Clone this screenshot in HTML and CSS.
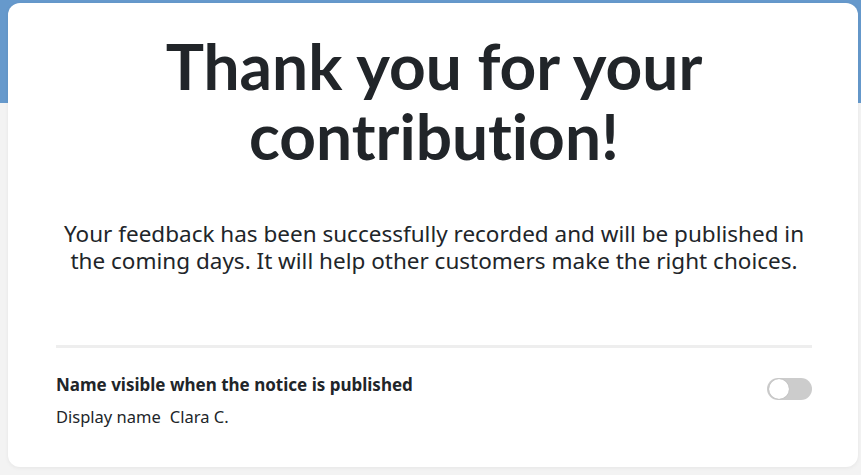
FILE: index.html
```html
<!DOCTYPE html>
<html lang="en">
<head>
<meta charset="utf-8">
<title>Thank you</title>
<link rel="stylesheet" href="styles.css">
</head>
<body>
<div class="page">
  <main class="card">
    <h1 class="title">Thank you for your contribution!</h1>
    <p class="lead">Your feedback has been successfully recorded and will be published in the coming days. It will help other customers make the right choices.</p>
    <hr class="divider">
    <div class="setting">
      <div class="setting-text">
        <div class="setting-label">Name visible when the notice is published</div>
        <div class="setting-value"><span>Display name</span><span>Clara C.</span></div>
      </div>
      <span class="toggle" role="switch" aria-checked="false"><span class="knob"></span></span>
    </div>
  </main>
</div>
</body>
</html>
```
FILE: styles.css
```css
* { box-sizing: border-box; }
html, body { margin: 0; padding: 0; }
body {
  font-family: "Noto Sans", "Open Sans", sans-serif;
  color: #212529;
  background: #f3f3f3;
}
.page {
  min-height: 475px;
  background: linear-gradient(#6699cc 0, #6699cc 103px, #f3f3f3 103px);
  padding: 3px 3px 8px 8px;
}
.card {
  background: #fff;
  border-radius: 12px;
  box-shadow: 0 1px 4px rgba(0,0,0,0.06);
  padding: 0 46px 0 48px;
  height: 464px;
  display: flex;
  flex-direction: column;
}
.title {
  margin: 28px 0 0;
  font-family: Lato, "Noto Sans", sans-serif;
  font-size: 64px;
  line-height: 70px;
  font-weight: 700;
  text-align: center;
  font-variant-ligatures: none;
  font-feature-settings: "liga" 0, "dlig" 0;
}
.lead {
  margin: 49px 0 0;
  font-size: 22.5px;
  line-height: 27px;
  text-align: center;
}
.divider {
  margin: 71px 0 0;
  border: 0;
  height: 3px;
  background: #eeeeee;
}
.setting {
  margin-top: 25px;
  display: flex;
  justify-content: space-between;
  align-items: flex-start;
}
.setting-label {
  font-size: 17px;
  font-weight: 700;
  line-height: 24px;
}
.setting-value {
  margin-top: 9px;
  font-size: 16.5px;
  line-height: 22px;
  display: flex;
  gap: 9px;
}
.toggle {
  margin-top: 5px;
  width: 45px;
  height: 22px;
  border-radius: 11px;
  background: #cccccc;
  display: flex;
  align-items: center;
  padding: 2px;
}
.knob {
  width: 20px;
  height: 20px;
  border-radius: 50%;
  background: #fff;
  box-shadow: 0 0 1px rgba(0,0,0,0.25);
}
```
